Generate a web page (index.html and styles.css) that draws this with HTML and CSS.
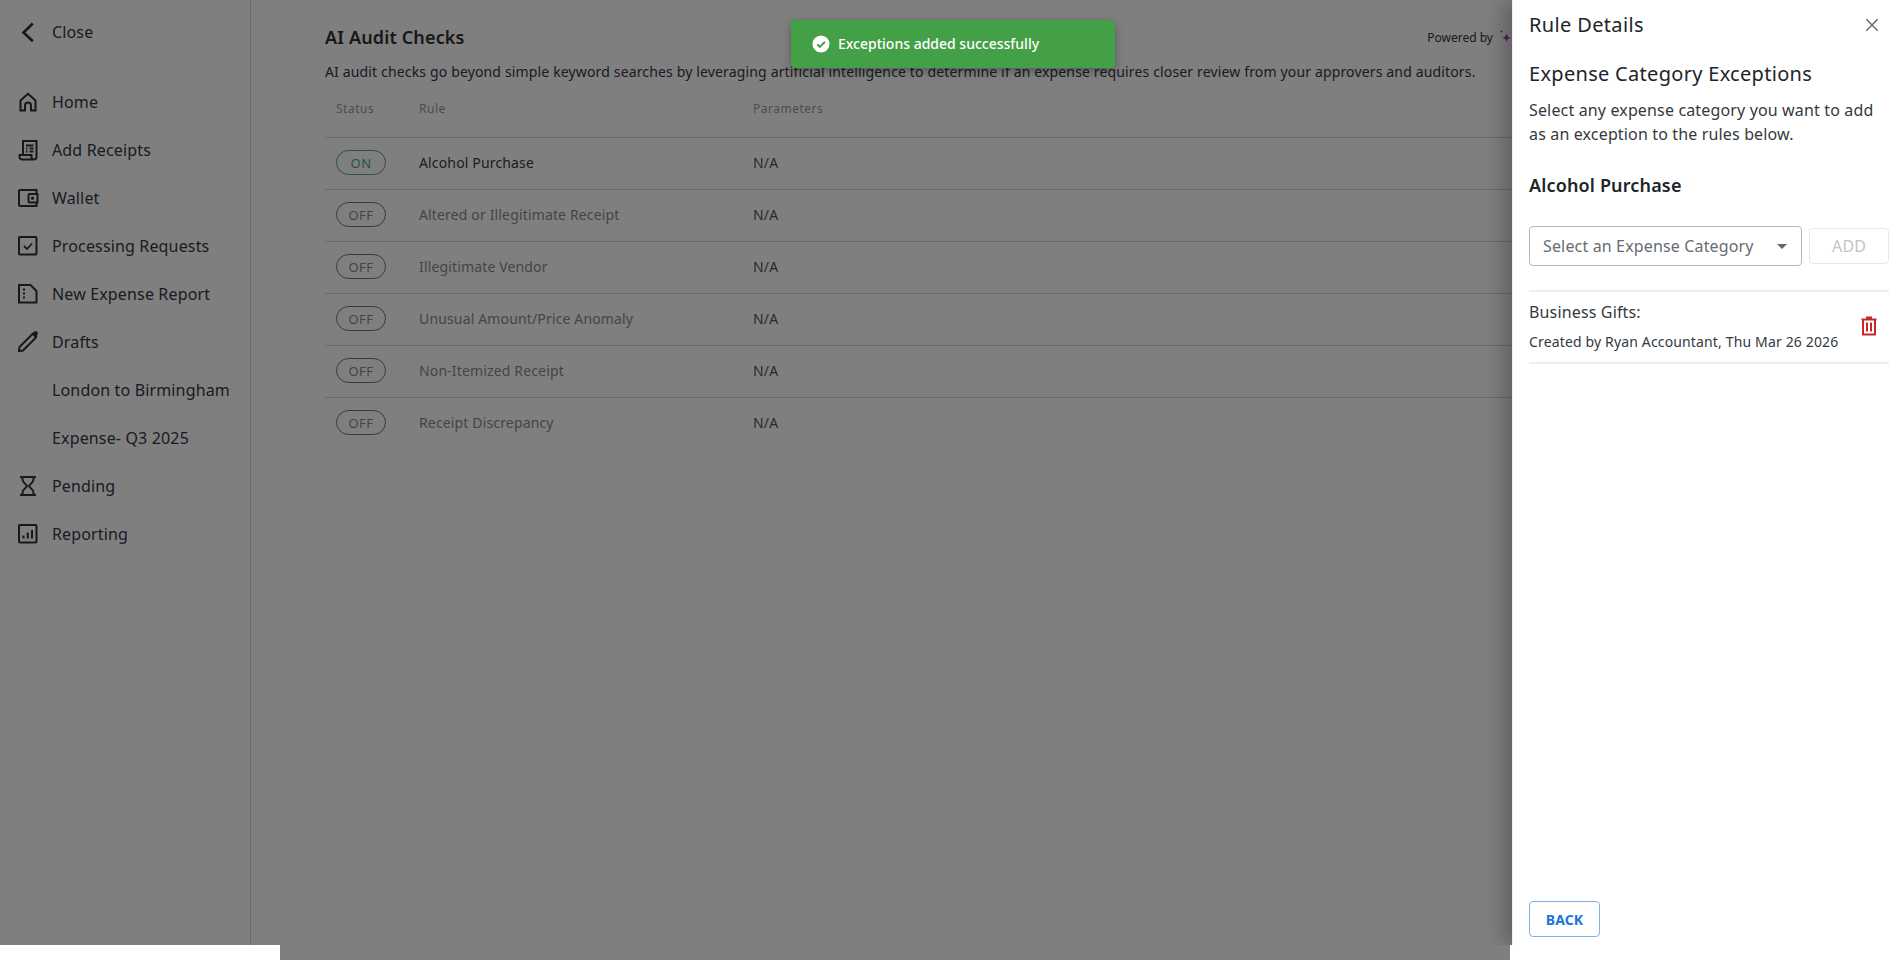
FILE: index.html
```html
<!DOCTYPE html>
<html lang="en">
<head>
<meta charset="utf-8">
<title>AI Audit Checks</title>
<link rel="stylesheet" href="styles.css">
</head>
<body>
<div class="app">
  <aside class="sidebar">
    <div class="close-row">
      <svg class="nav-icon" viewBox="0 0 24 24"><path class="s" d="M16.800 3.500 7.500 12.500l9.300 8.700" stroke-width="2.600"/></svg>
      <span>Close</span>
    </div>
    <nav class="nav">
      <div class="nav-item"><svg class="nav-icon" viewBox="0 0 24 24"><path class="s" d="M4.500 20.500V10.500L12 3.800l7.500 6.700v10h-4.500v-5a3 3 0 0 0-6 0v5z" stroke-width="2"/></svg><span>Home</span></div>
      <div class="nav-item"><svg class="nav-icon" viewBox="0 0 24 24"><path class="s" d="M7 17V3h13.500v16a2.500 2.500 0 0 1-5 0v-2H3.500v2a2.500 2.500 0 0 0 2.500 2.500h12M10 7.500h7.500M13.500 10.500h4M10 10.500h1.500M13.500 13.500h4M10 13.500h1.500" stroke-width="2"/></svg><span>Add Receipts</span></div>
      <div class="nav-item"><svg class="nav-icon" viewBox="0 0 24 24"><path class="s" d="M20.500 7.500V4H4a1 1 0 0 0-1 1v14a1 1 0 0 0 1 1h16.500v-3.500M21 8h-7.500a1 1 0 0 0-1 1v6.500a1 1 0 0 0 1 1H21.500V8z" stroke-width="2"/><circle class="f" cx="16.500" cy="12.200" r="1.600"/></svg><span>Wallet</span></div>
      <div class="nav-item"><svg class="nav-icon" viewBox="0 0 24 24"><rect class="s" x="3" y="3" width="17.500" height="17.500" rx="1" stroke-width="2"/><path class="s" d="m8 12 3 3 5-5.500" stroke-width="1.800"/></svg><span>Processing Requests</span></div>
      <div class="nav-item"><svg class="nav-icon" viewBox="0 0 24 24"><path class="s" d="M3 3h11.500l6 6v11.500H3z" stroke-width="2"/><path class="s" d="M7 7.500h2M7 11.500h2M7 15.500h2" stroke-width="1.800"/></svg><span>New Expense Report</span></div>
      <div class="nav-item"><svg class="nav-icon" viewBox="0 0 24 24"><path class="s" d="M3 21l.5-4L16 4.500a2 2 0 0 1 3.500 3.500L7 20.500z" stroke-width="2"/><path class="f" d="M15.500 4 18 1.800a2 2 0 0 1 3.200 3.200L19.500 8z"/></svg><span>Drafts</span></div>
      <div class="nav-item"><span class="nav-gap"></span><span>London to Birmingham</span></div>
      <div class="nav-item"><span class="nav-gap"></span><span>Expense- Q3 2025</span></div>
      <div class="nav-item"><svg class="nav-icon" viewBox="0 0 24 24"><path class="s" d="M4 3h16M4 21h16M6.500 3v2.500c0 3 4 5 4.500 6.500-.5 1.500-4.500 3.500-4.500 6.500V21M17.500 3v2.500c0 3-4 5-4.500 6.500.5 1.500 4.500 3.500 4.500 6.500V21" stroke-width="2"/></svg><span>Pending</span></div>
      <div class="nav-item"><svg class="nav-icon" viewBox="0 0 24 24"><rect class="s" x="3" y="3" width="17.500" height="17.500" rx="1" stroke-width="2"/><path class="s" d="M7.500 16.500v-3M11.800 16.500V10.500M16 16.500V8" stroke-width="2"/></svg><span>Reporting</span></div>
    </nav>
  </aside>
  <main class="main">
    <div class="title-row">
      <h1 class="title">AI Audit Checks</h1>
      <div class="powered">Powered by <svg class="star" viewBox="0 0 14 14"><path class="star-path" d="M6.500 3.500l1.200 3 3 1.200-3 1.200-1.200 3-1.200-3-3-1.200 3-1.200zM1.500 0l.5 1 1 .5-1 .5-.5 1-.5-1-1-.5 1-.5z"/></svg></div>
    </div>
    <p class="desc">AI audit checks go beyond simple keyword searches by leveraging artificial intelligence to determine if an expense requires closer review from your approvers and auditors.</p>
    <div class="table">
      <div class="row head"><span>Status</span><span>Rule</span><span>Parameters</span></div>
      <div class="row on"><span><b class="pill">ON</b></span><span>Alcohol Purchase</span><span class="na">N/A</span></div>
      <div class="row"><span><b class="pill">OFF</b></span><span>Altered or Illegitimate Receipt</span><span class="na">N/A</span></div>
      <div class="row"><span><b class="pill">OFF</b></span><span>Illegitimate Vendor</span><span class="na">N/A</span></div>
      <div class="row"><span><b class="pill">OFF</b></span><span>Unusual Amount/Price Anomaly</span><span class="na">N/A</span></div>
      <div class="row"><span><b class="pill">OFF</b></span><span>Non-Itemized Receipt</span><span class="na">N/A</span></div>
      <div class="row last"><span><b class="pill">OFF</b></span><span>Receipt Discrepancy</span><span class="na">N/A</span></div>
    </div>
  </main>
</div>
<div class="overlay"></div>
<div class="toast">
  <svg class="toast-icon" viewBox="0 0 20 20"><circle cx="10" cy="10" r="9.500" fill="#fff"/><path d="m5.800 10.300 2.900 2.900L14.400 7.500" fill="none" stroke="#43a047" stroke-width="2.200"/></svg>
  <span>Exceptions added successfully</span>
</div>
<section class="panel">
  <div class="panel-head">
    <h2 class="panel-title">Rule Details</h2>
    <svg class="x" viewBox="0 0 16 16"><path d="M1.500 1.500l13 13M14.500 1.500l-13 13"/></svg>
  </div>
  <h3 class="panel-sub">Expense Category Exceptions</h3>
  <p class="panel-text">Select any expense category you want to add as an exception to the rules below.</p>
  <h4 class="panel-rule">Alcohol Purchase</h4>
  <div class="picker">
    <div class="select"><span>Select an Expense Category</span><i class="caret"></i></div>
    <div class="add">ADD</div>
  </div>
  <div class="exception">
    <div class="exc-text">
      <div class="exc-name">Business Gifts:</div>
      <div class="exc-meta">Created by Ryan Accountant, Thu Mar 26 2026</div>
    </div>
    <svg class="trash" viewBox="0 0 16 20"><path d="M5 1.500h6M.5 3.500h15M2 3.500v15h12v-15M6 6.500v9M10 6.500v9"/></svg>
  </div>
  <div class="panel-foot"><div class="back">BACK</div></div>
</section>
</body>
</html>
```

FILE: styles.css
```css
* { box-sizing: border-box; }
html, body { margin: 0; height: 100%; background: #fff; overflow: hidden; }
body { font-family: "Noto Sans", sans-serif; color: #323845; font-size: 16px; letter-spacing: .15px; position: relative; width: 1904px; height: 970px; }
.app { display: flex; height: 945px; }
.sidebar { width: 251px; flex: none; border-right: 1px solid #d6d6d6; padding: 8px 0 0 16px; }
.close-row { display: flex; align-items: center; gap: 12px; height: 48px; }
.nav { margin-top: 22px; display: flex; flex-direction: column; }
.nav-item { display: flex; align-items: center; gap: 12px; height: 48px; }
.nav-icon { width: 24px; height: 24px; flex: none; }
.nav-gap { width: 24px; flex: none; }
.s { fill: none; stroke: #2f3033; }
.f { fill: #2f3033; }
.main { flex: 1; padding: 22px 0 0 74px; min-width: 0; }
.title-row { display: flex; align-items: center; justify-content: space-between; height: 30px; width: 1189px; }
.title { margin: 0; font-size: 18px; font-weight: 600; color: #303030; }
.powered { font-size: 12px; letter-spacing: 0; color: #333; display: flex; align-items: center; gap: 7px; }
.star { width: 14px; height: 14px; }
.star-path { fill: #9a3fd0; }
.desc { margin: 9px 0 0; font-size: 14px; line-height: 22px; white-space: nowrap; color: #323845; }
.table { margin-top: 14px; width: 1555px; }
.row { display: grid; grid-template-columns: 83px 334px 1fr; height: 52px; align-items: center; padding: 0 0 2px 11px; border-bottom: 1px solid #d4d4d4; font-size: 14px; color: #8a8a8a; }
.row.head { height: 41px; align-items: start; padding: 3px 0 0 11px; font-size: 12px; letter-spacing: .5px; color: #9a9a9a; line-height: 18px; }
.row.on { color: #3a3a3a; }
.row.last { border-bottom: 0; height: 51px; }
.na { color: #555; }
.pill { display: flex; align-items: center; justify-content: center; width: 50px; height: 25px; border: 1px solid #777; border-radius: 13px; font-size: 13px; font-weight: 400; letter-spacing: .4px; color: #8a8a8a; }
.on .pill { border-color: #48aa80; color: #48aa80; }
.overlay { position: absolute; left: 0; top: 0; width: 1512px; height: 960px; background: rgba(0, 0, 0, .5); clip-path: polygon(0 0, 1512px 0, 1512px 945px, 1510px 945px, 1510px 960px, 280px 960px, 280px 945px, 0 945px); }
.toast { position: absolute; left: 791px; top: 20px; width: 324px; height: 48px; padding: 0 0 1px 21px; display: flex; align-items: center; gap: 8px; background: #43a047; color: #fff; font-size: 14px; font-weight: 500; letter-spacing: 0; border-radius: 4px; box-shadow: 0 3px 8px rgba(0, 0, 0, .3); }
.toast-icon { width: 18px; height: 18px; }
.panel { position: absolute; left: 1512px; top: 0; width: 392px; height: 945px; background: #fff; border-left: 1px solid #ececec; padding: 0 15px 0 16px; display: flex; flex-direction: column; box-shadow: -8px 0 20px rgba(0, 0, 0, .25); clip-path: inset(0 0 0 -30px); }
.panel-head { display: flex; align-items: center; justify-content: space-between; height: 49px; padding-right: 10px; }
.panel-title { margin: 0; font-size: 20px; font-weight: 400; letter-spacing: .35px; color: #212529; }
.x { width: 14px; height: 14px; fill: none; stroke: #62666c; stroke-width: 1.600; }
.panel-sub { margin: 10px 0 0; font-size: 20px; font-weight: 400; letter-spacing: .3px; line-height: 30px; color: #212529; }
.panel-text { margin: 9px 10px 0 0; font-size: 16px; line-height: 24px; color: #343a40; }
.panel-rule { margin: 26px 0 0; font-size: 18px; font-weight: 600; line-height: 26px; color: #212529; }
.picker { display: flex; align-items: center; gap: 7px; margin-top: 28px; }
.select { width: 274px; height: 40px; border: 1px solid #b8b8b8; border-radius: 4px; padding: 0 14px 0 13px; display: flex; align-items: center; justify-content: space-between; color: #666c74; }
.caret { border-left: 5px solid transparent; border-right: 5px solid transparent; border-top: 5px solid #666; }
.add { width: 80px; height: 36px; border: 1px solid #e8e8e8; border-radius: 4px; display: flex; align-items: center; justify-content: center; font-size: 16px; color: #c4c4c4; }
.exception { margin-top: 24px; height: 74px; border-top: 2px solid #eee; border-bottom: 2px solid #eee; padding-bottom: 1px; display: flex; align-items: center; justify-content: space-between; padding-right: 12px; }
.exc-name { font-size: 16px; line-height: 24px; color: #343a40; }
.exc-meta { font-size: 14px; line-height: 22px; margin-top: 7px; color: #343a40; }
.trash { width: 16px; height: 20px; margin-bottom: 2px; fill: none; stroke: #c62828; stroke-width: 2; }
.panel-foot { margin-top: auto; padding-bottom: 8px; }
.back { width: 71px; height: 36px; border: 1px solid #7cb4e8; border-radius: 4px; display: flex; align-items: center; justify-content: center; font-size: 14px; font-weight: 700; color: #1976d2; }
```
